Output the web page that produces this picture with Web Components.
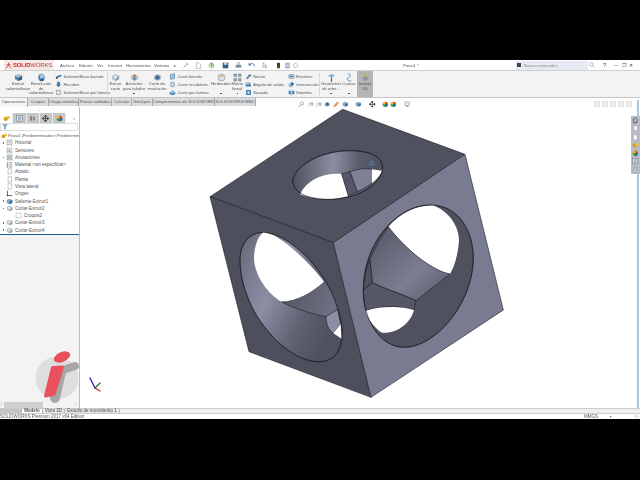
<!DOCTYPE html>
<html>
<head>
<meta charset="utf-8">
<title>SOLIDWORKS</title>
<style>
  html, body { margin: 0; background: #000; width: 640px; height: 480px; overflow: hidden; }
  body { font-family: "Liberation Sans", "Open Sans", sans-serif; color: #444; }
  sw-app { padding-top: 60px; filter: blur(.25px); }
</style>
</head>
<body>
<sw-app></sw-app>
<script>
// little icons used all over the ribbon and the tree
const ICONS = {
  cube: '<path d="M5 1 9 3v4L5 9 1 7V3z" fill="#5b87ad"/><path d="M5 5 9 3v4L5 9z" fill="#2f5f88"/><path d="M5 1 9 3 5 5 1 3z" fill="#a9c4d9"/>',
  rev: '<ellipse cx="5" cy="5" rx="3.6" ry="4.2" fill="#4f86b5"/><path d="M3 2 7 1 8 5 4 7z" fill="#a7c6dc"/><path d="M3 7 7 6 7 9 4 9z" fill="#2b5c88"/>',
  sweep: '<path d="M1 7C2 3 5 4 9 2v3C6 6 4 6 3 9z" fill="#3f7fb3"/><path d="M1 7 3 9 4 6z" fill="#1f4f7a"/>',
  loft: '<path d="M3 1h4v4h2L5 9 1 5h2z" fill="#4a7ea8"/>',
  shell: '<path d="M2 2h6v6H2z" fill="#d8dde2" stroke="#808a93" stroke-width=".8"/><path d="M4 4h2v2H4z" fill="#fff"/>',
  cutbox: '<path d="M5 1 9 3v4L5 9 1 7V3z" fill="#b8c6d2"/><path d="M5 5 9 3v4L5 9z" fill="#8aa0b3"/><path d="M3.5 3h3v3h-3z" fill="#e8edf1"/>',
  hole: '<path d="M5 1 9 3v4L5 9 1 7V3z" fill="#b9c3cc"/><circle cx="5" cy="3.4" r="1.6" fill="#d07a2f"/><path d="M4 5h2v3H4z" fill="#3f6f99"/>',
  cutrev: '<path d="M5 1 9 3v4L5 9 1 7V3z" fill="#b5c4d0"/><circle cx="5" cy="5" r="2.6" fill="#2f6ea5"/><circle cx="5" cy="5" r="1" fill="#e33"/>',
  cutsweep: '<path d="M2 2 8 1v7L2 9z" fill="#c5d3de" stroke="#2c6a9d" stroke-width=".8"/><path d="M3 7 7 3" stroke="#2c6a9d"/>',
  cutloft: '<path d="M3 2h4l1 3-1 3H3L2 5z" fill="#c9d3db" stroke="#3a709c" stroke-width=".7"/>',
  cutthick: '<path d="M1 5 5 2l4 3v2L5 9 1 7z" fill="#2f78b3"/><path d="M1 5 5 2l4 3-4 2z" fill="#8fb8d6"/>',
  fillet: '<circle cx="5" cy="5" r="3.8" fill="#dfe4e8" stroke="#6f7a84" stroke-width=".6"/><path d="M3 4l4-1" stroke="#d9822b"/>',
  pattern: '<g fill="#8da5b8" stroke="#52687a" stroke-width=".4"><path d="M1 1h3v3H1zM6 1h3v3H6zM1 6h3v3H1zM6 6h3v3H6z"/></g>',
  rib: '<path d="M1 8 6 2l3 1-5 6z" fill="#5a8fb8"/><path d="M6 2l3 1-1 2z" fill="#234f75"/>',
  draft: '<path d="M1 2h6l2 6H1z" fill="#3b80b5"/><path d="M1 2h6l-2 3H1z" fill="#b5d0e3"/>',
  hollow: '<path d="M1.5 1.5h7v7h-7z" fill="#3d7fb0"/><path d="M3.5 3.5h3v3h-3z" fill="#eef3f6"/>',
  wrap: '<rect x="1" y="2" width="8" height="6" rx="2" fill="#a9c2d6" stroke="#5a7f9e" stroke-width=".6"/><path d="M3 5h4" stroke="#33597a"/>',
  inter: '<circle cx="4" cy="6" r="3" fill="#8fb5d2"/><path d="M5 1 9 4 6 7 4 4z" fill="#2c6ea5"/>',
  mirror: '<path d="M1 2 4 3v5L1 7z" fill="#3f7fb3"/><path d="M9 2 6 3v5l3-1z" fill="#3f7fb3"/><path d="M5 0v10" stroke="#888" stroke-width=".6"/>',
  refgeo: '<path d="M1 3 5 1l4 2-4 2z" fill="#7fb0d3"/><path d="M5 5v5" stroke="#3a709c" stroke-width="1.4"/>',
  curves: '<path d="M3 1c4 0 4 3 1 4s-2 4 3 4" fill="none" stroke="#3f86bb" stroke-width=".9"/>',
  instant: '<path d="M1 6 5 3l4 3-4 3z" fill="#8f96a3"/><path d="M2 1l6 3" stroke="#d8b21f" stroke-width="1.3"/>',
  part: '<path d="M1 4 4 2l3 2v3L4 9 1 7z" fill="#d6a21e"/><path d="M5 2 8 1l2 2v2L7 6 5 4z" fill="#edc441"/>',
  history: '<rect x="1.5" y="1.5" width="7" height="7" fill="#eef1f3" stroke="#6d7882" stroke-width=".7"/><path d="M5 3v2l1.5 1" stroke="#2d6da3" stroke-width=".7" fill="none"/>',
  sensor: '<rect x="1.5" y="1.5" width="7" height="7" fill="#f4f4f4" stroke="#8d949a" stroke-width=".7"/><path d="M3 7V4M5 7V3M7 7V5" stroke="#66727d" stroke-width=".8"/>',
  notes: '<rect x="1.5" y="1.5" width="7" height="7" fill="#e5eaee" stroke="#66727d" stroke-width=".7"/><path d="M3 7 5 3l2 4" stroke="#27557d" stroke-width=".7" fill="none"/>',
  material: '<path d="M1 2h2v1.4H1zM1 5h2v1.4H1zM1 8h2v1.4H1z" fill="#37618a"/><path d="M4 2.6h5M4 5.6h5M4 8.6h5" stroke="#444" stroke-width=".8"/>',
  plane: '<path d="M3 1 8 1 8 8 3 9z" fill="#fff" stroke="#8a9299" stroke-width=".7"/>',
  origin: '<path d="M2 1v7h7" fill="none" stroke="#222" stroke-width="1"/><circle cx="2" cy="8" r="1" fill="#222"/>',
  sketch: '<rect x="1.5" y="1.5" width="7" height="7" fill="#fff" stroke="#9aa0a6" stroke-width=".7"/>',
  tree: '<rect x="1" y="1" width="8" height="8" fill="#d9e2ea" stroke="#5f7486" stroke-width=".7"/><path d="M3 3h4M3 5h4M3 7h4" stroke="#3a5f80" stroke-width=".7"/>',
  props: '<path d="M2 2h2v6H2zM6 2h2v6H6z" fill="#6b7075"/><path d="M3 1v8" stroke="#c33" stroke-width=".5"/>',
  move: '<path d="M5 .5v9M.5 5h9M5 .5 3.6 2h2.8zM5 9.5 3.6 8h2.8zM.5 5 2 3.6v2.8zM9.5 5 8 3.6v2.8z" stroke="#222" stroke-width=".9" fill="#222"/>',
  wheel: '<circle cx="5" cy="5" r="4" fill="#2f9a3f"/><path d="M5 5V1a4 4 0 0 1 4 4z" fill="#e53f2f"/><path d="M5 5h4a4 4 0 0 1-4 4z" fill="#2f5fc4"/><path d="M5 5H1a4 4 0 0 1 4-4z" fill="#f0c520"/>',
  filter: '<path d="M1 1h8L6 5v4L4 8V5z" fill="#7fb0cf" stroke="#3d6f91" stroke-width=".5"/>',
  search: '<circle cx="4" cy="4" r="3" fill="none" stroke="#777" stroke-width=".8"/><path d="M6 6l3 3" stroke="#777"/>',
  gear: '<circle cx="5" cy="5" r="3" fill="none" stroke="#999" stroke-width="1.4" stroke-dasharray="1.2 .6"/>',
  save: '<rect x="1" y="1" width="8" height="8" fill="#33628c"/><rect x="3" y="1" width="4" height="3" fill="#cfe0ec"/>',
  print: '<rect x="1" y="4" width="8" height="4" fill="#7d8b98"/><rect x="3" y="1" width="4" height="3" fill="#e8edf0" stroke="#667" stroke-width=".4"/>',
  undo: '<path d="M2 4c3-3 7-2 7 2" fill="none" stroke="#2a6cae" stroke-width="1.3"/><path d="M1 1v4h4z" fill="#2a6cae"/>',
  cursor: '<path d="M3 1v7l2-2 2 3 1-1-2-2.5h2z" fill="#fff" stroke="#555" stroke-width=".6"/>',
  light: '<rect x="3" y="1" width="4" height="8" rx="1" fill="#222"/><circle cx="5" cy="3" r="1" fill="#d33"/><circle cx="5" cy="6.5" r="1" fill="#3a3"/>',
  opts: '<rect x="2" y="1" width="6" height="8" fill="#8ea4b6"/><path d="M3 3h4M3 5h4M3 7h4" stroke="#eef"/>',
  open: '<circle cx="5" cy="5" r="3.6" fill="#cfe3bd" stroke="#7a8a6c" stroke-width=".6"/><path d="M5 1v4h3" stroke="#3c8a35" fill="none"/>',
  file: '<path d="M2 1h4l2 2v6H2z" fill="#fff" stroke="#888" stroke-width=".7"/>',
  zoomv: '<circle cx="6" cy="4" r="2.6" fill="none" stroke="#66727d" stroke-width=".8"/><path d="M4 6 1 9" stroke="#66727d"/>',
  zooma: '<path d="M1 9V3h6" fill="none" stroke="#9aa3ab" stroke-dasharray="1 .6"/><circle cx="6" cy="5" r="2" fill="none" stroke="#5c7990"/>',
  viewbox: '<path d="M5 1 9 3v4L5 9 1 7V3z" fill="#7fa4c2"/><path d="M5 5 9 3v4L5 9z" fill="#3f6f96"/>',
  monitor: '<rect x="1.5" y="1.5" width="7" height="5.5" fill="#e8edf0" stroke="#6d7882" stroke-width=".7"/><path d="M3 8.5h4" stroke="#6d7882"/>',
  home: '<path d="M1 5 5 1l4 4M2.5 5v4h5V5" fill="none" stroke="#334" stroke-width="1"/>',
  pin: '<path d="M3 7 7 3M5 1l4 4M1 9l3-3" stroke="#2d6da3" stroke-width="1"/>',
  edit: '<path d="M1 9 2 6l5-5 2 2-5 5z" fill="#e3b23c" stroke="#a33" stroke-width=".4"/>',
  box: '<rect x="1.5" y="1.5" width="7" height="7" fill="none" stroke="#aaa" stroke-width=".8"/><path d="M3.5 5h3" stroke="#aaa" stroke-width=".8"/>'
};

class SwIcon extends HTMLElement {
  constructor() {
    super();
    this.attachShadow({ mode: 'open' });
    const size = this.getAttribute('size') || 10;
    this.shadowRoot.innerHTML = `
      <style>
        :host { display: block; width: ${size}px; height: ${size}px; flex: none; }
        svg { display: block; width: 100%; height: 100%; }
      </style>
      <svg viewBox="0 0 10 10">${ICONS[this.getAttribute('name')] || ''}</svg>`;
  }
}
customElements.define('sw-icon', SwIcon);

// big ribbon button: icon on top, label under it
class SwTool extends HTMLElement {
  constructor() {
    super();
    this.attachShadow({ mode: 'open' });
    this.shadowRoot.innerHTML = `
      <style>
        :host { display: flex; flex-direction: column; align-items: center; flex: none; height: 26px;
                box-sizing: border-box; padding-top: 2px; text-align: center; position: relative; }
        :host([on]) { background: #b4b4b4; }
        .t { white-space: pre-line; line-height: 4.7px; }
        .d { position: absolute; bottom: 3px; width: 1.5px; height: 1px; background: #555; }
      </style>
      <sw-icon name="${this.getAttribute('icon')}" size="9"></sw-icon>
      <div class="t"><slot></slot></div>
      ${this.hasAttribute('drop') ? '<div class="d"></div>' : ''}`;
    this.style.width = this.getAttribute('w') + 'px';
  }
}
customElements.define('sw-tool', SwTool);

// column of three small buttons with icon and text
class SwStack extends HTMLElement {
  constructor() {
    super();
    this.attachShadow({ mode: 'open' });
    const rows = this.getAttribute('rows').split('|').map(r => {
      const [icon, text] = r.split(':');
      return `<div class="r"><sw-icon name="${icon}" size="7"></sw-icon><span>${text}</span></div>`;
    }).join('');
    this.shadowRoot.innerHTML = `
      <style>
        :host { display: flex; flex-direction: column; flex: none; height: 26px; box-sizing: border-box; padding-top: 1.15px; }
        .r { display: flex; align-items: center; gap: 1.5px; height: 8.7px; white-space: nowrap; }
      </style>${rows}`;
    this.style.width = this.getAttribute('w') + 'px';
    this.style.paddingLeft = (this.getAttribute('pl') || 0) + 'px';
  }
}
customElements.define('sw-stack', SwStack);

class SwTitlebar extends HTMLElement {
  constructor() {
    super();
    this.attachShadow({ mode: 'open' });
    const qa = ['file', 'open', 'save', 'print', 'undo', 'cursor', 'light'];
    this.shadowRoot.innerHTML = `
      <style>
        :host { display: flex; align-items: center; height: 10px; background: #fff; position: relative; font-size: 4.2px; color: #555; }
        .logo { flex: none; width: 50px; height: 10px; margin-left: 4px; display: flex; align-items: center; gap: 1px;
                background: #f6e9e8; font: 700 6px "Liberation Sans", sans-serif; color: #d02a2a; letter-spacing: -.2px; box-sizing: border-box; padding-left: 1px; }
        .logo i { font-style: normal; font-weight: 400; color: #b04545; }
        .menu { flex: none; width: 123px; margin-left: 6px; display: flex; }
        .menu span { display: block; }
        .qa { flex: none; display: flex; align-items: center; gap: 6.3px; margin-left: 6px; width: 208px; }
        .qa .tight { margin-left: -4.5px; }
        .doc { width: 113px; flex: none; }
        .search { flex: none; width: 72px; height: 9px; background: #e6eaf3; display: flex; align-items: center; gap: 3px; box-sizing: border-box; padding-left: 1px; color: #888; }
        .search b { width: 4px; height: 4px; background: #444; display: block; }
        .win { flex: 1; display: flex; align-items: center; padding-left: 1px; color: #444; font-size: 6px; white-space: nowrap; }
        .win span { display: block; }
      </style>
      <div class="logo"><svg width="7" height="7" viewBox="0 0 10 10"><path d="M5 1v4L1 9M5 5l4 4M2 4h6" stroke="#d02a2a" stroke-width="1.2" fill="none"/></svg><span>SOLID<i>WORKS</i></span></div>
      <div class="menu">
        <span style="width:19px">Archivo</span><span style="width:18px">Edición</span><span style="width:11px">Ver</span>
        <span style="width:18px">Insertar</span><span style="width:28px">Herramientas</span><span style="width:20px">Ventana</span><span>▸</span>
      </div>
      <sw-icon name="pin" size="6"></sw-icon>
      <div class="qa">${qa.map(q => `<sw-icon name="${q}" size="7"></sw-icon>`).join('')}<sw-icon class="tight" name="opts" size="7"></sw-icon><sw-icon class="tight" name="gear" size="7"></sw-icon></div>
      <div class="doc">Pieza1 *</div>
      <div class="search"><b></b><span>Buscar comandos</span></div>
      <div class="win"><sw-icon name="search" size="6"></sw-icon><span style="margin-left:8px">?</span><span style="margin-left:8px">–</span><span style="margin-left:4px;font-size:5px">❐</span><span style="margin-left:3px;font-size:5px">✕</span></div>`;
  }
}
customElements.define('sw-titlebar', SwTitlebar);

class SwRibbon extends HTMLElement {
  constructor() {
    super();
    this.attachShadow({ mode: 'open' });
    this.shadowRoot.innerHTML = `
      <style>
        :host { display: flex; height: 28px; background: #f3f3f3; box-sizing: border-box; padding-left: 6px;
                border-top: 1px solid #d0d0d0; border-bottom: 1px solid #c4c4c4; font-size: 4.2px; color: #555; }
        .sep { flex: none; width: 1px; margin: 2px 1px; background: #d6d6d6; }
      </style>
      <sw-tool icon="cube" w="24">Extruir
saliente/base</sw-tool>
      <sw-tool icon="rev" w="22">Revolución
de
saliente/base</sw-tool>
      <sw-stack w="54" pl="3" rows="sweep:Saliente/Base barrido|loft:Recubrir|shell:Saliente/Base por lámina"></sw-stack>
      <div class="sep"></div>
      <sw-tool icon="cutbox" w="13">Extruir
corte</sw-tool>
      <sw-tool icon="hole" w="24" drop>Asistente
para taladro</sw-tool>
      <sw-tool icon="cutrev" w="22">Corte de
revolución</sw-tool>
      <sw-stack w="44" pl="1" rows="cutsweep:Corte barrido|cutloft:Corte recubierto|cutthick:Corte por lámina"></sw-stack>
      <sw-tool icon="fillet" w="18" drop>Redondeo</sw-tool>
      <sw-tool icon="pattern" w="14.5" drop>Matriz
lineal</sw-tool>
      <sw-stack w="42.5" rows="rib:Nervio|draft:Ángulo de salida|hollow:Vaciado"></sw-stack>
      <sw-stack w="32" pl=".5" rows="wrap:Envolver|inter:Intersección|mirror:Simetría"></sw-stack>
      <div class="sep" style="margin:2px 0"></div>
      <sw-tool icon="refgeo" w="22" drop>Geometría
de refer...</sw-tool>
      <sw-tool icon="curves" w="14" drop>Curvas</sw-tool>
      <div style="width:1px"></div>
      <sw-tool icon="instant" w="16" on>Instant
3D</sw-tool>`;
  }
}
customElements.define('sw-ribbon', SwRibbon);

// command tabs, with the floating view toolbar sitting on the same row
class SwCmdTabs extends HTMLElement {
  constructor() {
    super();
    this.attachShadow({ mode: 'open' });
    const tabs = [['Operaciones', 28], ['Croquis', 21], ['Chapa metálica', 30], ['Piezas soldadas', 33], ['Calcular', 20], ['SimXpert', 21], ['Complementos de SOLIDWORKS', 62], ['SOLIDWORKS MBD', 41]];
    const view = [['zoomv', 298], ['zooma', 308], ['zooma', 316], ['cutrev', 324], ['edit', 333], ['viewbox', 342], ['viewbox', 355], ['move', 369], ['wheel', 382], ['wheel', 390], ['monitor', 404]];
    let x = 256;
    const bar = view.map(v => {
      const m = v[1] - x;
      x = v[1] + 6.5;
      return `<sw-icon name="${v[0]}" size="6.5" style="margin:2.5px 0 0 ${m}px"></sw-icon>`;
    }).join('');
    this.shadowRoot.innerHTML = `
      <style>
        :host { display: flex; height: 9px; background: #fff; font-size: 4.2px; color: #555; position: relative; }
        .t { flex: none; box-sizing: border-box; height: 8px; background: #dcdcdc; border-right: 1px solid #aaa; text-align: center; line-height: 8px; white-space: nowrap; }
        .t.on { background: #f5f5f5; height: 9px; }
        .ctl { margin: 3px 0 0 183px; height: 6px; display: flex; gap: 2px; }
        .strip { position: absolute; left: 636.5px; top: 2px; bottom: 0; width: 2px; background: #a8c6e0; }
      </style>
      ${tabs.map((t, i) => `<div class="t ${i ? '' : 'on'}" style="width:${t[1]}px">${t[0]}</div>`).join('')}
      ${bar}
      <div class="ctl"><sw-icon name="box" size="6"></sw-icon><sw-icon name="box" size="6"></sw-icon><sw-icon name="box" size="6"></sw-icon><sw-icon name="box" size="6"></sw-icon><sw-icon name="box" size="6"></sw-icon></div>
      <div class="strip"></div>`;
  }
}
customElements.define('sw-cmd-tabs', SwCmdTabs);

class SwTreeRow extends HTMLElement {
  constructor() {
    super();
    this.attachShadow({ mode: 'open' });
    const lvl = +(this.getAttribute('level') || 0);
    this.shadowRoot.innerHTML = `
      <style>
        :host { display: flex; align-items: center; height: 7.27px; white-space: nowrap; gap: 2px; box-sizing: border-box; position: relative; padding-left: ${6 + lvl}px; }
        .x { position: absolute; left: 2.5px; top: 3px; width: 1.5px; height: 1.5px; background: #777; }
      </style>
      ${this.hasAttribute('open') ? '<div class="x"></div>' : ''}
      <sw-icon name="${this.getAttribute('icon')}" size="7"></sw-icon><span><slot></slot></span>`;
  }
}
customElements.define('sw-tree-row', SwTreeRow);

class SwTree extends HTMLElement {
  constructor() {
    super();
    this.attachShadow({ mode: 'open' });
    this.shadowRoot.innerHTML = `
      <style>
        :host { display: flex; flex-direction: column; flex: none; width: 80px; box-sizing: border-box; border-right: 1px solid #bdbdbd;
                background: #f3f3f3; position: relative; font-size: 4.5px; color: #555; overflow: hidden; }
        .head { background: #fff; height: 128px; flex: none; }
        .grip { height: 6px; text-align: center; font-size: 3px; line-height: 6px; color: #777; }
        .tabs { display: flex; height: 10px; align-items: stretch; background: #fff; }
        .tabs div { width: 13.25px; display: flex; align-items: center; justify-content: center; background: #c6c6c6; box-sizing: border-box; border-right: 1px solid #eee; }
        .tabs div.on { background: #fff; }
        .tabs span { margin-left: 7px; line-height: 10px; color: #666; font-size: 5px; }
        .filter { height: 8px; margin: 0 1px 0 0; border: 1px solid #ddd; box-sizing: border-box; padding-left: 1px; display: flex; align-items: center; }
        .rows { margin-top: 1px; }
        .rule { height: 1px; background: #1d5e96; margin-top: .2px; }
        .top { display: flex; align-items: center; white-space: nowrap; height: 7.27px; gap: 1px; padding-left: 1px; font-size: 4.1px; }
        .logo { position: absolute; left: 0; top: 0; pointer-events: none; }
        .bar { position: absolute; left: 0; right: 0; bottom: 0; height: 7px; display: flex; align-items: center; color: #555; }
        .bar b { display: block; height: 6px; width: 39px; margin: 0 32px 0 2px; background: #d0d0d0; }
        .bar i { font-style: normal; font-size: 3.5px; }
      </style>
      <div class="head">
        <div class="grip">▪</div>
        <div class="tabs">
          <div class="on"><sw-icon name="part" size="7"></sw-icon></div>
          <div><sw-icon name="tree" size="7"></sw-icon></div>
          <div><sw-icon name="props" size="7"></sw-icon></div>
          <div><sw-icon name="move" size="7"></sw-icon></div>
          <div><sw-icon name="wheel" size="7"></sw-icon></div>
          <span>›</span>
        </div>
        <div class="filter"><sw-icon name="filter" size="6"></sw-icon></div>
        <div class="rows">
          <div class="top"><sw-icon name="part" size="6"></sw-icon><span>Pieza1 (Predeterminado&lt;&lt;Predetermin</span></div>
          <sw-tree-row icon="history" open>Historial</sw-tree-row>
          <sw-tree-row icon="sensor">Sensores</sw-tree-row>
          <sw-tree-row icon="notes" open>Anotaciones</sw-tree-row>
          <sw-tree-row icon="material">Material &lt;sin especificar&gt;</sw-tree-row>
          <sw-tree-row icon="plane">Alzado</sw-tree-row>
          <sw-tree-row icon="plane">Planta</sw-tree-row>
          <sw-tree-row icon="plane">Vista lateral</sw-tree-row>
          <sw-tree-row icon="origin">Origen</sw-tree-row>
          <sw-tree-row icon="viewbox" open>Saliente-Extruir1</sw-tree-row>
          <sw-tree-row icon="cutbox" open>Cortar-Extruir2</sw-tree-row>
          <sw-tree-row icon="sketch" level="9">Croquis2</sw-tree-row>
          <sw-tree-row icon="cutbox" open>Cortar-Extruir3</sw-tree-row>
          <sw-tree-row icon="cutbox" open>Cortar-Extruir4</sw-tree-row>
        </div>
        <div class="rule"></div>
      </div>
      <svg class="logo" width="79" height="300" viewBox="0 107 79 300">
        <circle cx="57" cy="378" r="21.5" fill="#dedede"/>
        <path d="M75 366 60 371" stroke="#a6a6a6" stroke-width="8" stroke-linecap="round" fill="none"/>
        <path d="M61 372 55 398" stroke="#a6a6a6" stroke-width="10" stroke-linecap="round" fill="none"/>
        <path d="M52.5 367.500 62.5 367 54 394 45.5 396Z" fill="#e8505c" stroke="#e8505c" stroke-width="3" stroke-linejoin="round"/>
        <ellipse cx="62" cy="357" rx="8.7" ry="4.8" transform="rotate(-24 62 357)" fill="#e8505c"/>
      </svg>
      <div class="bar"><i style="margin-left:1px">‹</i><b></b><i>›</i></div>`;
  }
}
customElements.define('sw-tree', SwTree);

// the cube is drawn in the coords of a 3x crop, so the shape is easy to tune
class SwViewport extends HTMLElement {
  constructor() {
    super();
    this.attachShadow({ mode: 'open' });
    const side = ['home', 'plane', 'file', 'part', 'wheel', 'tree', 'opts'];
    this.shadowRoot.innerHTML = `
      <style>
        :host { display: block; flex: 1; position: relative; background: #fff; overflow: hidden; }
        svg.scene { display: block; position: absolute; left: 0; top: 0; }
        .pane { position: absolute; right: 0; top: 9px; width: 9px; display: flex; flex-direction: column; align-items: center; gap: 1.8px; background: #b9bcc2; padding: 1px 0; }
        .strip { position: absolute; left: 556.5px; top: 0; bottom: 0; width: 2px; background: #a8c6e0; }
      </style>
      <svg class="scene" width="560" height="300" viewBox="80 107 560 300">
        <defs>
          <linearGradient id="w1" x1="0" y1="0" x2="1" y2="0"><stop offset="0" stop-color="#50515e"/><stop offset=".45" stop-color="#8b8da2"/><stop offset=".75" stop-color="#5a5b69"/><stop offset="1" stop-color="#50515e"/></linearGradient>
          <linearGradient id="w2" x1="0" y1="0" x2="1" y2="1"><stop offset="0" stop-color="#555664"/><stop offset=".6" stop-color="#7b7d92"/><stop offset="1" stop-color="#595a69"/></linearGradient>
          <linearGradient id="w3" x1="0" y1="0" x2="1" y2=".6"><stop offset="0" stop-color="#666778"/><stop offset=".42" stop-color="#8c8ea4"/><stop offset=".75" stop-color="#5f6070"/><stop offset="1" stop-color="#50515e"/></linearGradient>
          <linearGradient id="w4" x1="0" y1="0" x2="1" y2=".3"><stop offset="0" stop-color="#50515e"/><stop offset="1" stop-color="#6d6e80"/></linearGradient>
        </defs>
        <g transform="translate(200 100) scale(.33333)" stroke="#1d1d25" stroke-width="1.8" stroke-linejoin="round">
          <path d="M428 28 795 163 400 428 30 290Z" fill="#50515e"/>
          <path d="M30 290 400 428 513 892 147 755Z" fill="#4e4f5d"/>
          <path d="M795 163 910 630 513 892 400 428Z" fill="#797b90"/>

          <path d="M278 240C290 190 370 152 450 152 510 152 548 170 548 205 545 250 480 298 385 298 320 298 278 275 278 240Z" fill="url(#w1)"/>
          <path d="M300 283C320 240 370 218 425 222L445 288C400 302 340 300 300 283Z" fill="#fff" stroke="none"/>
          <path d="M425 222 450 215 472 275 445 288Z" fill="#55566a"/>
          <path d="M450 215C480 205 500 205 515 208V250C500 262 485 270 472 275Z" fill="#7f8197"/>
          <path d="M515 208 546 212C540 228 528 240 515 250Z" fill="#fff" stroke="none"/>
          <path d="M278 240C290 190 370 152 450 152 510 152 548 170 548 205 545 250 480 298 385 298 320 298 278 275 278 240Z" fill="none"/>

          <path d="M490 570C490 430 590 315 690 315 780 315 822 400 820 480 815 620 700 745 610 742 540 740 490 660 490 570Z" fill="#50515e"/>
          <path d="M565 380C600 340 650 315 700 316 760 340 785 400 775 440 770 480 760 505 750 522 690 510 610 440 565 380Z" fill="#fff" stroke="none"/>
          <path d="M565 380C610 440 690 510 750 522L648 602C600 580 550 565 517 548L510 480C525 440 545 410 565 380Z" fill="url(#w2)"/>
          <path d="M490 570 517 548 510 480C495 510 492 540 490 570Z" fill="#50515e"/>
          <path d="M490 570 517 548C550 565 600 580 648 602L642 630C600 618 550 615 497 632 492 610 490 590 490 570Z" fill="#565766"/>
          <path d="M497 632C550 615 610 620 642 630 632 670 590 702 545 698 520 680 505 660 497 632Z" fill="#fff" stroke="none"/>
          <path d="M490 570C490 430 590 315 690 315 780 315 822 400 820 480 815 620 700 745 610 742 540 740 490 660 490 570Z" fill="none"/>

          <path d="M120 480C120 430 150 397 190 397 270 400 370 510 400 590 420 640 430 680 425 720 420 760 395 787 355 785 290 785 210 720 160 630 135 580 120 530 120 480Z" fill="url(#w3)"/>
          <path d="M190 397C240 400 330 490 372 545 340 575 290 605 243 605 200 580 160 520 162 470 165 430 175 410 190 397Z" fill="#fff" stroke="none"/>
          <path d="M243 605C290 605 340 575 372 545 385 560 395 575 400 590L413 628 378 650C330 640 280 625 243 605Z" fill="url(#w4)" stroke="none"/>
          <path d="M243 605C280 625 330 640 378 650" fill="none"/>
          <path d="M378 650 413 628 422 672 400 700C385 690 378 670 378 650Z" fill="#8c8ea4"/>
          <path d="M400 700 422 672 425 716Z" fill="#fff" stroke="none"/>
          <path d="M120 480C120 430 150 397 190 397 270 400 370 510 400 590 420 640 430 680 425 720 420 760 395 787 355 785 290 785 210 720 160 630 135 580 120 530 120 480Z" fill="none"/>

          <circle cx="515" cy="190" r="6" fill="none" stroke="#3f92b8" stroke-width="3"/>
        </g>
        <g stroke-width="1.4" stroke-linecap="round">
          <path d="M95 388 90 378" stroke="#2b2bc8"/>
          <path d="M95 388 100 383" stroke="#1f7a2f"/>
          <path d="M95 388 100 391" stroke="#c8283c"/>
        </g>
      </svg>
      <div class="strip"></div>
      <div class="pane">${side.map(n => `<sw-icon name="${n}" size="6.5"></sw-icon>`).join('')}</div>`;
  }
}
customElements.define('sw-viewport', SwViewport);

class SwBottom extends HTMLElement {
  constructor() {
    super();
    this.attachShadow({ mode: 'open' });
    this.shadowRoot.innerHTML = `
      <style>
        :host { display: block; font-size: 4.5px; color: #555; background: #fff; }
        .tabs { display: flex; height: 5px; background: #f0f0f0; border-top: 1px solid #ccc; box-sizing: border-box; }
        .tabs div { line-height: 4px; text-align: center; white-space: nowrap; box-sizing: border-box; border-right: 1px solid #bbb; }
        .status { display: flex; height: 6px; align-items: center; border-top: 1px solid #ccc; box-sizing: border-box; white-space: nowrap; background: #fff; }
      </style>
      <div class="tabs">
        <div style="width:22px;background:#c4c4c4"></div>
        <div style="width:21px;background:#fff;font-weight:700">Modelo</div>
        <div style="width:22px;background:#e4e4e4">Vista 3D</div>
        <div style="width:55px;background:#e4e4e4">Estudio de movimiento 1</div>
      </div>
      <div class="status">
        <span style="width:584px">SOLIDWORKS Premium 2017 x64 Edition</span>
        <span style="width:26px">MMGS</span><span style="width:24px">▪</span><sw-icon name="gear" size="5"></sw-icon>
      </div>`;
  }
}
customElements.define('sw-bottom', SwBottom);

class SwApp extends HTMLElement {
  constructor() {
    super();
    this.attachShadow({ mode: 'open' });
    this.shadowRoot.innerHTML = `
      <style>
        :host { display: block; width: 640px; }
        .work { display: flex; height: 301px; }
      </style>
      <sw-titlebar></sw-titlebar>
      <sw-ribbon></sw-ribbon>
      <sw-cmd-tabs></sw-cmd-tabs>
      <div class="work"><sw-tree></sw-tree><sw-viewport></sw-viewport></div>
      <sw-bottom></sw-bottom>`;
  }
}
customElements.define('sw-app', SwApp);
</script>
</body>
</html>
